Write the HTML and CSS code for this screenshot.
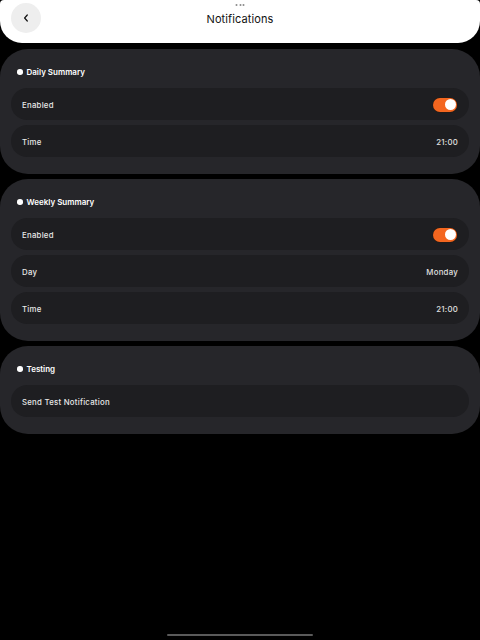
FILE: index.html
```html
<!DOCTYPE html>
<html>
<head>
<meta charset="utf-8">
<link rel="stylesheet" href="styles.css">
</head>
<body>
<div class="screen">
  <header class="topbar">
    <div class="grabber"><span></span><span></span><span></span></div>
    <button class="back" aria-label="Back">
      <svg width="8" height="10" viewBox="0 0 8 10"><path d="M5.3 2 L2.6 5 L5.3 8" fill="none" stroke="#111" stroke-width="1.2" stroke-linecap="round" stroke-linejoin="round"/></svg>
    </button>
    <h1 class="title">Notifications</h1>
  </header>

  <main class="content">
    <section class="card">
      <div class="card-title"><span class="dot"></span>Daily Summary</div>
      <div class="rows">
        <div class="row"><span class="label">Enabled</span><span class="toggle on"><span class="knob"></span></span></div>
        <div class="row"><span class="label">Time</span><span class="value">21:00</span></div>
      </div>
    </section>

    <section class="card">
      <div class="card-title"><span class="dot"></span>Weekly Summary</div>
      <div class="rows">
        <div class="row"><span class="label">Enabled</span><span class="toggle on"><span class="knob"></span></span></div>
        <div class="row"><span class="label">Day</span><span class="value">Monday</span></div>
        <div class="row"><span class="label">Time</span><span class="value">21:00</span></div>
      </div>
    </section>

    <section class="card">
      <div class="card-title"><span class="dot"></span>Testing</div>
      <div class="rows">
        <div class="row"><span class="label">Send Test Notification</span></div>
      </div>
    </section>
  </main>

  <div class="home-indicator"></div>
</div>
</body>
</html>
```

FILE: styles.css
```css
* { box-sizing: border-box; }
html, body {
  margin: 0;
  padding: 0;
  background: #000;
  font-family: "Inter", "Noto Sans", sans-serif;
}
.screen {
  position: relative;
  width: 480px;
  height: 640px;
  background: #000;
  overflow: hidden;
}
.topbar {
  position: relative;
  height: 43px;
  background: #fff;
  border-radius: 4px 4px 22px 22px;
  display: flex;
  align-items: center;
  justify-content: center;
}
.grabber {
  position: absolute;
  top: 4px;
  left: 50%;
  transform: translateX(-50%);
  display: flex;
  gap: 1.5px;
}
.grabber span {
  width: 2px;
  height: 2px;
  border-radius: 50%;
  background: #8a8a8a;
}
.back {
  position: absolute;
  left: 11px;
  top: 3px;
  width: 30px;
  height: 30px;
  border-radius: 50%;
  border: none;
  background: #eeeeee;
  padding: 0;
  display: flex;
  align-items: center;
  justify-content: center;
}
.title {
  margin: 0;
  margin-top: -6px;
  font-size: 11px;
  font-weight: 400;
  color: #111;
  letter-spacing: 0.1px;
}
.content {
  padding-top: 6px;
  display: flex;
  flex-direction: column;
  gap: 5px;
}
.card {
  background: #26262a;
  border-radius: 28px;
  padding: 15px 11px 17px;
}
.card-title {
  height: 16px;
  display: flex;
  align-items: center;
  gap: 4px;
  padding-left: 6px;
  font-size: 8px;
  font-weight: 600;
  color: #fff;
  margin-bottom: 8px;
}
.dot {
  width: 5.5px;
  height: 5.5px;
  border-radius: 50%;
  background: #fff;
}
.rows {
  display: flex;
  flex-direction: column;
  gap: 5px;
}
.row {
  height: 32px;
  border-radius: 16px;
  background: #1e1e21;
  display: flex;
  align-items: center;
  justify-content: space-between;
  padding: 1px 11px 0;
  color: #e8e8e8;
  font-size: 7.8px;
  font-weight: 500;
  letter-spacing: 0.25px;
}
.value {
  color: #e0e0e0;
}
.toggle {
  width: 24px;
  height: 14px;
  border-radius: 7px;
  background: #f4661f;
  position: relative;
  margin-right: 1px;
  box-shadow: 0 0 0 0.5px #2a1a10;
}
.knob {
  position: absolute;
  right: 1.5px;
  top: 1.5px;
  width: 11px;
  height: 11px;
  border-radius: 50%;
  background: #fff;
}
.home-indicator {
  position: absolute;
  left: 167px;
  bottom: 4px;
  width: 146px;
  height: 2.5px;
  border-radius: 2px;
  background: #5a5a5a;
}
```
